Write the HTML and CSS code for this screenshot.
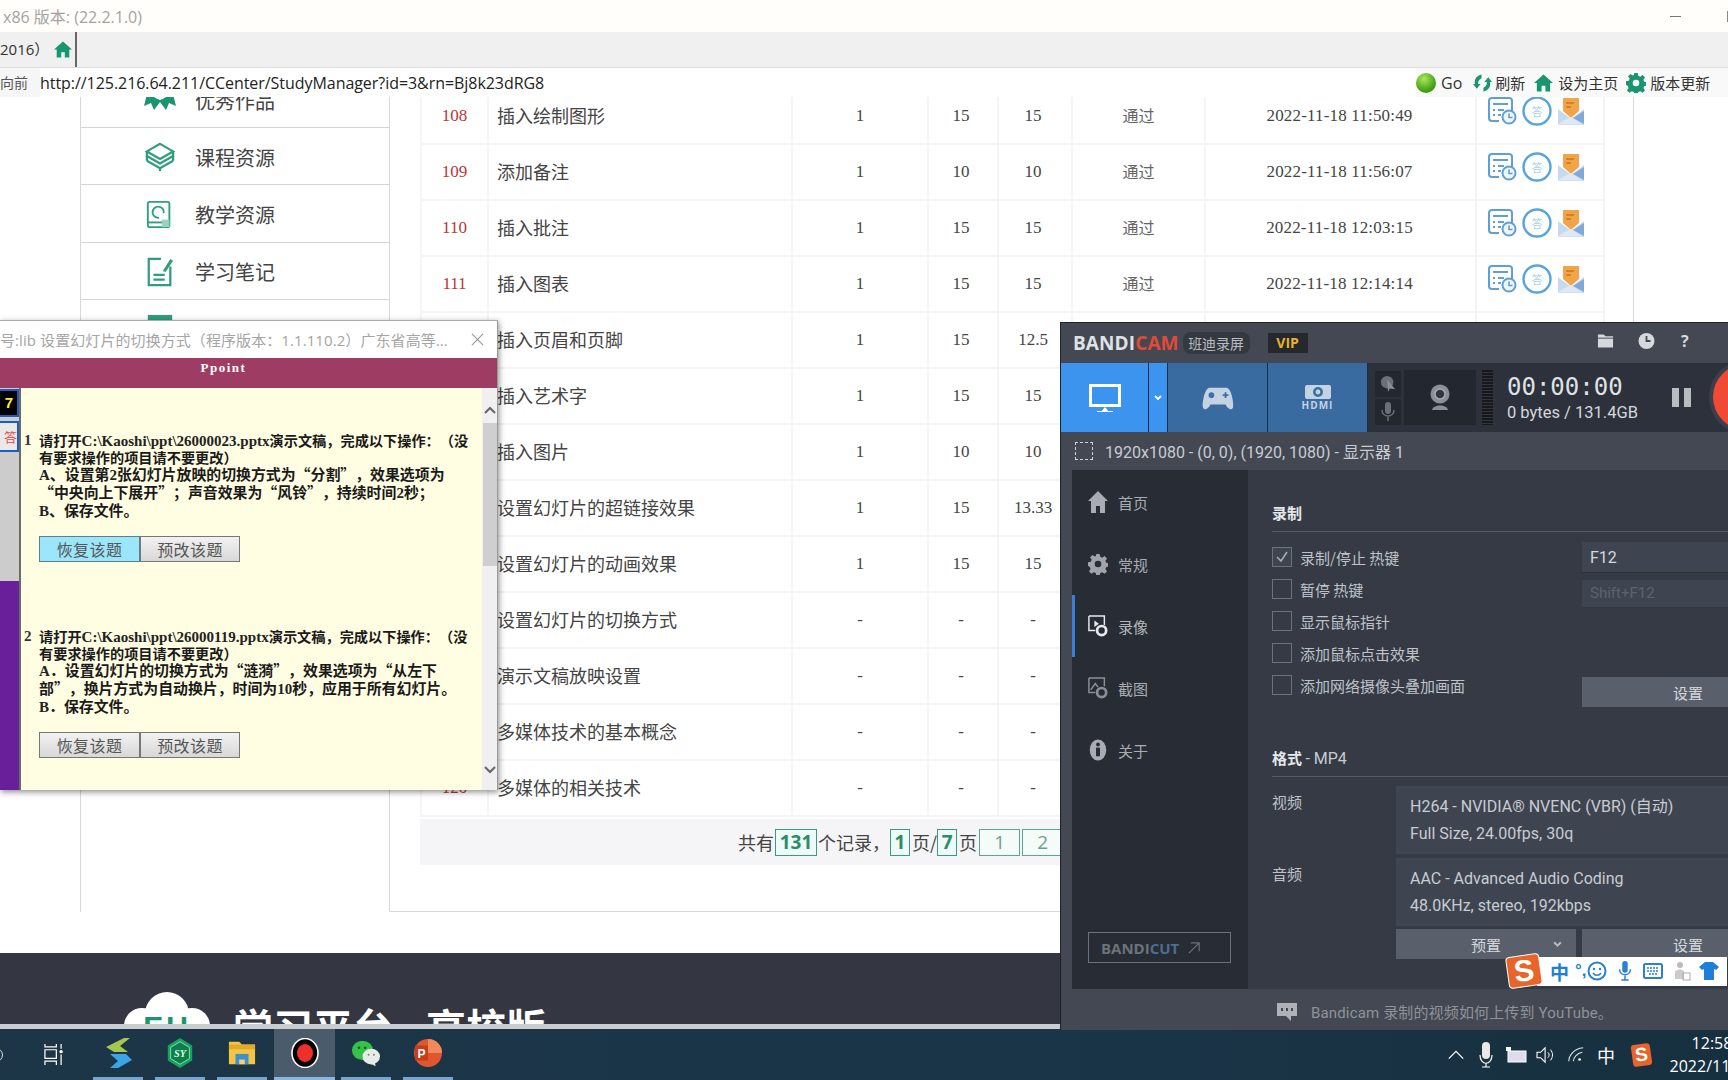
FILE: index.html
```html
<!DOCTYPE html>
<html lang="zh-CN">
<head>
<meta charset="utf-8">
<title>学习平台</title>
<link rel="stylesheet" href="styles.css">
</head>
<body>
<svg class="defs" width="0" height="0" aria-hidden="true">
  <symbol id="i-doc" viewBox="0 0 30 28">
    <path d="M12 24H5a3 3 0 0 1-3-3V4a3 3 0 0 1 3-3h17a3 3 0 0 1 3 3v10" fill="none" stroke="#5f9fd6" stroke-width="2"/>
    <path d="M6 7h15M6 13h2M11 13h6M6 18h2M11 18h3" stroke="#5f9fd6" stroke-width="2" fill="none"/>
    <circle cx="22" cy="20" r="6.5" fill="#eef6fc" stroke="#5f9fd6" stroke-width="2"/>
    <path d="M22 16.5V20.5H25.5" fill="none" stroke="#5f9fd6" stroke-width="1.6"/>
  </symbol>
  <symbol id="i-ans" viewBox="0 0 30 30">
    <circle cx="15" cy="15" r="13.5" fill="#fff" stroke="#58a4dc" stroke-width="2.400"/>
    <text x="15" y="20" text-anchor="middle" class="svg-ans">答</text>
  </symbol>
  <symbol id="i-mail" viewBox="0 0 26 28">
    <path d="M0 12L13 22L26 12V28H0Z" fill="#c6d9ee"/>
    <path d="M26 14V27L15 21Z" fill="#7fa9d8"/>
    <path d="M5 1H21V14L13 21L5 14Z" fill="#f0a548"/>
    <path d="M8 6h8M8 10h5" stroke="#c97a1e" stroke-width="1.4"/>
    <path d="M0 27L12 20L14 21L25 27.500H0Z" fill="#dfe9f5"/>
  </symbol>
  <symbol id="i-home" viewBox="0 0 20 18">
    <path d="M10 0L20 9H17V18H12V12H8V18H3V9H0Z" fill="#19956f"/>
  </symbol>
  <symbol id="i-gear" viewBox="0 0 24 24">
    <path d="M10 0h4l.7 3.400 2.400 1 2.900-1.900 2.800 2.800-1.900 2.900 1 2.400 3.100.4v4l-3.100.7-1 2.400 1.900 2.900-2.800 2.800-2.900-1.900-2.400 1-.7 3.100h-4l-.7-3.100-2.400-1-2.900 1.900-2.800-2.800 1.900-2.900-1-2.400L0 14V10l3.400-.7 1-2.400L2.500 4 5.300 1.200 8.200 3.100l1.100-.6z" fill="currentColor"/>
    <circle cx="12" cy="12" r="4" fill="var(--hole,#fff)"/>
  </symbol>
</svg>

<div class="desktop">
  <div class="browser">
    <div class="titlebar">
      <span class="title-text">x86 版本: (22.2.1.0)</span>
      <span class="win-min"></span>
      <span class="win-max"></span>
    </div>
    <div class="tabbar">
      <div class="tab">
        <span class="tab-text">2016）</span>
        <svg class="tab-home"><use href="#i-home"/></svg>
      </div>
    </div>
    <div class="addrbar">
      <span class="back">向前</span>
      <span class="url">http://125.216.64.211/CCenter/StudyManager?id=3&amp;rn=Bj8k23dRG8</span>
      <div class="tools">
        <span class="go-ball"></span><span class="go">Go</span>
        <svg class="tool-refresh" viewBox="0 0 20 20"><path d="M9 1C4 2 1 6 2 11L0 11L4 16L8 11H5.500C5 8 6.500 6 9 5ZM11 19C16 18 19 14 18 9L20 9L16 4L12 9H14.500C15 12 13.500 14 11 15Z" fill="#19956f"/></svg>
        <span class="tool-label tl-refresh">刷新</span>
        <svg class="tool-home"><use href="#i-home"/></svg>
        <span class="tool-label tl-home">设为主页</span>
        <svg class="tool-gear"><use href="#i-gear"/></svg>
        <span class="tool-label tl-gear">版本更新</span>
      </div>
    </div>
    <div class="viewport">
      <div class="page">
        <div class="columns">
          <aside class="sidenav">
            <div class="nav-item">
              <svg class="nav-icon" viewBox="0 0 32 28"><path d="M4 4C7 10 11 12 16 14C21 12 25 10 28 4L32 20L25 17L22 24L16 16L10 24L7 17L0 20Z" fill="#19956f"/></svg>
              <span>优秀作品</span>
            </div>
            <div class="nav-item">
              <svg class="nav-icon" viewBox="0 0 32 32"><g fill="none" stroke="#2f9e7e" stroke-width="2.400"><path d="M16 2L30 10L16 18L2 10Z"/><path d="M2 15L16 23L30 15"/><path d="M2 20L16 28L30 20"/><path d="M2 10V20M30 10V20M16 28V31"/></g></svg>
              <span>课程资源</span>
            </div>
            <div class="nav-item">
              <svg class="nav-icon" viewBox="0 0 32 32"><g fill="none" stroke="#2f9e7e" stroke-width="2"><rect x="3" y="3" width="23" height="27" rx="2"/><path d="M3 25H26"/><path d="M20 15A6 6 0 1 0 15 20"/></g><path d="M18 22h8v8h-8z" fill="#9ad2be"/></svg>
              <span>教学资源</span>
            </div>
            <div class="nav-item">
              <svg class="nav-icon" viewBox="0 0 32 32"><g fill="none" stroke="#2f9e7e" stroke-width="2.400"><path d="M17 2H4V30H27V10"/><path d="M9 19H21M9 24H21"/></g><path d="M19 15L27 2L30 4L22 16Z" fill="#2f9e7e"/></svg>
              <span>学习笔记</span>
            </div>
            <div class="nav-item"><svg class="nav-icon" viewBox="0 0 32 32"><rect x="3" y="1" width="26" height="30" fill="#2f9e7e"/></svg></div>
            <div class="nav-item"></div>
          </aside>
          <main class="panel">
            <table class="records">
              <colgroup><col class="c-no"><col class="c-name"><col class="c-a"><col class="c-b"><col class="c-c"><col class="c-st"><col class="c-dt"><col class="c-op"></colgroup>
              <tbody>
                <tr><td class="no">108</td><td class="name">插入绘制图形</td><td>1</td><td class="sc">15</td><td class="sc">15</td><td class="st">通过</td><td class="dt">2022-11-18 11:50:49</td><td class="op"><svg class="ic-doc"><use href="#i-doc"/></svg><svg class="ic-ans"><use href="#i-ans"/></svg><svg class="ic-mail"><use href="#i-mail"/></svg></td></tr>
                <tr><td class="no">109</td><td class="name">添加备注</td><td>1</td><td class="sc">10</td><td class="sc">10</td><td class="st">通过</td><td class="dt">2022-11-18 11:56:07</td><td class="op"><svg class="ic-doc"><use href="#i-doc"/></svg><svg class="ic-ans"><use href="#i-ans"/></svg><svg class="ic-mail"><use href="#i-mail"/></svg></td></tr>
                <tr><td class="no">110</td><td class="name">插入批注</td><td>1</td><td class="sc">15</td><td class="sc">15</td><td class="st">通过</td><td class="dt">2022-11-18 12:03:15</td><td class="op"><svg class="ic-doc"><use href="#i-doc"/></svg><svg class="ic-ans"><use href="#i-ans"/></svg><svg class="ic-mail"><use href="#i-mail"/></svg></td></tr>
                <tr><td class="no">111</td><td class="name">插入图表</td><td>1</td><td class="sc">15</td><td class="sc">15</td><td class="st">通过</td><td class="dt">2022-11-18 12:14:14</td><td class="op"><svg class="ic-doc"><use href="#i-doc"/></svg><svg class="ic-ans"><use href="#i-ans"/></svg><svg class="ic-mail"><use href="#i-mail"/></svg></td></tr>
                <tr><td class="no">112</td><td class="name">插入页眉和页脚</td><td>1</td><td class="sc">15</td><td class="sc">12.5</td><td class="st">通过</td><td class="dt"></td><td class="op"></td></tr>
                <tr><td class="no">113</td><td class="name">插入艺术字</td><td>1</td><td class="sc">15</td><td class="sc">15</td><td class="st"></td><td class="dt"></td><td class="op"></td></tr>
                <tr><td class="no">114</td><td class="name">插入图片</td><td>1</td><td class="sc">10</td><td class="sc">10</td><td class="st"></td><td class="dt"></td><td class="op"></td></tr>
                <tr><td class="no">115</td><td class="name">设置幻灯片的超链接效果</td><td>1</td><td class="sc">15</td><td class="sc">13.33</td><td class="st"></td><td class="dt"></td><td class="op"></td></tr>
                <tr><td class="no">116</td><td class="name">设置幻灯片的动画效果</td><td>1</td><td class="sc">15</td><td class="sc">15</td><td class="st"></td><td class="dt"></td><td class="op"></td></tr>
                <tr><td class="no">117</td><td class="name">设置幻灯片的切换方式</td><td>-</td><td class="sc">-</td><td class="sc">-</td><td class="st"></td><td class="dt"></td><td class="op"></td></tr>
                <tr><td class="no">118</td><td class="name">演示文稿放映设置</td><td>-</td><td class="sc">-</td><td class="sc">-</td><td class="st"></td><td class="dt"></td><td class="op"></td></tr>
                <tr><td class="no">119</td><td class="name">多媒体技术的基本概念</td><td>-</td><td class="sc">-</td><td class="sc">-</td><td class="st"></td><td class="dt"></td><td class="op"></td></tr>
                <tr><td class="no">120</td><td class="name">多媒体的相关技术</td><td>-</td><td class="sc">-</td><td class="sc">-</td><td class="st"></td><td class="dt"></td><td class="op"></td></tr>
              </tbody>
            </table>
            <div class="pager">
              <span>共有</span><b class="pg-num pg-total">131</b><span>个记录，</span><b class="pg-num pg-cur">1</b><span>页/</span><b class="pg-num pg-cur">7</b><span>页</span><a class="pg-link pg-first">1</a><a class="pg-link">2</a>
            </div>
          </main>
        </div>
        <footer class="site-foot">
          <svg class="foot-logo" viewBox="0 0 86 60"><circle cx="43" cy="22" r="22" fill="#fff"/><circle cx="18" cy="34" r="18" fill="#fff"/><circle cx="68" cy="34" r="18" fill="#fff"/><rect x="10" y="30" width="66" height="30" fill="#fff"/><text x="43" y="45" text-anchor="middle" class="svg-eu">EU</text></svg>
          <span class="foot-title">学习平台</span><span class="foot-title">高校版</span>
        </footer>
      </div>
    </div>
  </div>

  <div class="taskbar">
    <div class="tb-start">
      <span class="cortana"></span>
      <svg class="taskview" viewBox="0 0 20 22"><g fill="none" stroke="#fff" stroke-width="1.300"><path d="M1 0V3H13V0M1 6H13V15H1ZM1 22V18H13V22"/><path d="M18 0V5M18 11V22"/></g><circle cx="18" cy="8" r="1.800" fill="#fff"/></svg>
    </div>
    <span class="tb-app"><svg class="app-ic" viewBox="0 0 28 30"><path d="M2 9L20 0H26L16 8L24 14H10Z" fill="#a7c64e"/><path d="M6 16H22L28 22L14 30H6L14 23Z" fill="#3ba6e6"/></svg></span>
    <span class="tb-app"><svg class="app-ic" viewBox="0 0 28 32"><path d="M14 0L27 8V24L14 32L1 24V8Z" fill="#17a35f"/><path d="M14 4L24 10V22L14 28L4 22V10Z" fill="#0d7d49" stroke="#8fe0b4"/><text x="14" y="20" text-anchor="middle" class="svg-sy">SY</text></svg></span>
    <span class="tb-app"><svg class="app-ic" viewBox="0 0 30 28"><path d="M1 2H12L15 5H29V26H1Z" fill="#f4c542"/><path d="M1 5H29V10H1Z" fill="#e3a92a"/><path d="M8 15H22V26H8Z" fill="#3f8fd0"/><path d="M12 21H18V26H12Z" fill="#f6d365"/></svg></span>
    <span class="tb-app tb-active"><svg class="app-ic" viewBox="0 0 28 30"><ellipse cx="14" cy="15" rx="13" ry="14.500" fill="#000" stroke="#fff" stroke-width="1.600"/><ellipse cx="14" cy="15" rx="8" ry="9" fill="#ee2f2a"/></svg></span>
    <span class="tb-app"><svg class="app-ic" viewBox="0 0 32 30"><ellipse cx="12" cy="12" rx="12" ry="11" fill="#36c24a"/><circle cx="8" cy="9" r="1.500" fill="#14611f"/><circle cx="15" cy="9" r="1.500" fill="#14611f"/><ellipse cx="22" cy="19" rx="10" ry="9" fill="#e6ece6"/><circle cx="19" cy="17" r="1.200" fill="#888"/><circle cx="25" cy="17" r="1.200" fill="#888"/><path d="M21 27L27 30L26 25Z" fill="#e6ece6"/></svg></span>
    <span class="tb-app"><svg class="app-ic" viewBox="0 0 30 30"><circle cx="15" cy="15" r="15" fill="#e0562f"/><path d="M15 0A15 15 0 0 1 30 15H15Z" fill="#f08a5d"/><rect x="1" y="7" width="14" height="16" rx="1" fill="#c43e1c"/><text x="8" y="20" text-anchor="middle" class="svg-p">P</text></svg></span>
    <div class="tray">
      <svg class="tray-ic" viewBox="0 0 20 20"><path d="M2 14L10 6L18 14" fill="none" stroke="#fff" stroke-width="1.300"/></svg>
      <svg class="tray-ic tray-tall" viewBox="0 0 14 26"><rect x="3" y="0" width="8" height="17" rx="4" fill="#e8e8e8"/><path d="M1 13C1 24 13 24 13 13M7 21V25M3 25H11" fill="none" stroke="#fff" stroke-width="1.200"/></svg>
      <svg class="tray-ic" viewBox="0 0 22 18"><rect x="3" y="5" width="18" height="11" fill="#dde" stroke="#fff"/><path d="M1 1H6V5H1Z" fill="#fff"/></svg>
      <svg class="tray-ic" viewBox="0 0 22 20"><path d="M1 7H5L10 2V18L5 13H1Z" fill="none" stroke="#fff" stroke-width="1.200"/><path d="M13 7C15 9 15 11 13 13M16 4C19 8 19 12 16 16" fill="none" stroke="#fff" stroke-width="1.100"/></svg>
      <svg class="tray-ic" viewBox="0 0 20 20"><path d="M2 17C2 10 8 3 18 2M7 17C7 13 11 8 17 7" fill="none" stroke="#dfe6ea" stroke-width="1.200"/><circle cx="14" cy="15" r="1.500" fill="#fff"/></svg>
      <span class="tray-ime">中</span>
      <span class="sogou-s tray-s">S</span>
      <div class="clock"><span>12:58</span><span>2022/11/18</span></div>
    </div>
  </div>

  <section class="dialog">
    <header class="dlg-head">
      <span class="dlg-title">号:lib&nbsp;设置幻灯片的切换方式（程序版本：1.1.110.2）广东省高等...</span>
      <svg class="dlg-close" viewBox="0 0 14 14"><path d="M1 1L13 13M13 1L1 13" stroke="#999" stroke-width="1.200"/></svg>
    </header>
    <div class="dlg-band">Ppoint</div>
    <div class="dlg-body">
      <div class="dlg-rail">
        <span class="rail-timer">7</span>
        <span class="rail-tag">答</span>
        <span class="rail-grey"></span>
        <span class="rail-purple"></span>
      </div>
      <div class="dlg-list">
        <article class="question q-first">
          <span class="q-no">1</span>
          <div class="q-main">
            <p class="q-lead">请打开<span class="q-lat">C:\Kaoshi\ppt\26000023.pptx</span>演示文稿，完成以下操作：（没<br>有要求操作的项目请不要更改）</p>
            <p class="q-steps"><span class="q-lat">A</span>、设置第<span class="q-lat">2</span>张幻灯片放映的切换方式为“分割”，效果选项为<br>“中央向上下展开”；声音效果为“风铃”，持续时间<span class="q-lat">2</span>秒；<br><span class="q-lat">B</span>、保存文件。</p>
            <div class="q-btns"><button class="q-btn q-on">恢复该题</button><button class="q-btn">预改该题</button></div>
          </div>
        </article>
        <article class="question q-second">
          <span class="q-no">2</span>
          <div class="q-main">
            <p class="q-lead">请打开<span class="q-lat">C:\Kaoshi\ppt\26000119.pptx</span>演示文稿，完成以下操作：（没<br>有要求操作的项目请不要更改）</p>
            <p class="q-steps"><span class="q-lat">A</span>．设置幻灯片的切换方式为“涟漪”，效果选项为“从左下<br>部”，换片方式为自动换片，时间为<span class="q-lat">10</span>秒，应用于所有幻灯片。<br><span class="q-lat">B</span>．保存文件。</p>
            <div class="q-btns"><button class="q-btn">恢复该题</button><button class="q-btn">预改该题</button></div>
          </div>
        </article>
      </div>
      <div class="dlg-scroll">
        <svg class="sb-arrow" viewBox="0 0 12 8"><path d="M1 7L6 2L11 7" fill="none" stroke="#666" stroke-width="2"/></svg>
        <span class="sb-thumb"></span>
        <svg class="sb-arrow sb-down" viewBox="0 0 12 8"><path d="M1 1L6 6L11 1" fill="none" stroke="#666" stroke-width="2"/></svg>
      </div>
    </div>
  </section>

  <section class="bandicam">
    <header class="bc-top">
      <span class="bc-logo">BANDI<em>CAM</em></span>
      <span class="bc-cn">班迪录屏</span>
      <span class="bc-vip">VIP</span>
      <div class="bc-top-icons">
        <svg viewBox="0 0 18 16"><path d="M1 1H7L9 3H17V15H1Z" fill="#d5d8dc"/><path d="M1 5H17" stroke="#434852"/></svg>
        <svg viewBox="0 0 16 16"><circle cx="8" cy="8" r="8" fill="#d5d8dc"/><path d="M8 3V8H12" fill="none" stroke="#434852" stroke-width="1.800"/></svg>
        <span class="bc-help">?</span>
      </div>
    </header>
    <div class="bc-modes">
      <span class="mode mode-screen"><svg class="mode-ic-lg" viewBox="0 0 32 28"><rect x="1.500" y="1.500" width="29" height="20" fill="none" stroke="#fff" stroke-width="3"/><path d="M12 28L16 23L20 28Z" fill="#fff"/><path d="M8 28H24" stroke="#fff" stroke-width="2"/></svg></span>
      <span class="mode mode-drop"><svg viewBox="0 0 8 6"><path d="M1 1L4 4L7 1" fill="none" stroke="#fff" stroke-width="1.800"/></svg></span>
      <span class="mode mode-alt"><svg class="mode-ic-lg" viewBox="0 0 34 26"><path d="M8 2H26C31 2 34 18 33 23C32 26 28 26 25 20H9C6 26 2 26 1 23C0 18 3 2 8 2Z" fill="#c4d3e2"/><circle cx="10" cy="10" r="3" fill="#3d6fa3"/><path d="M22 10H28M25 7V13" stroke="#3d6fa3" stroke-width="2"/></svg></span>
      <span class="mode mode-alt mode-hdmi"><svg class="mode-ic-hd" viewBox="0 0 34 14"><rect x="4" y="0" width="26" height="14" rx="2" fill="#c4d3e2"/><circle cx="17" cy="7" r="5" fill="#3d6fa3"/><circle cx="17" cy="7" r="2.400" fill="#c4d3e2"/></svg><span class="hdmi-text">HDMI</span></span>
      <div class="bc-status">
        <div class="bc-mini">
          <span class="mini-box"><svg viewBox="0 0 18 20"><circle cx="8" cy="8" r="7" fill="#6b7078"/><path d="M8 5L17 16L11 15L9 19Z" fill="#8a8f96"/></svg></span>
          <span class="mini-box"><svg viewBox="0 0 14 20"><rect x="4" y="0" width="6" height="12" rx="3" fill="#6b7078"/><path d="M1 8C1 16 13 16 13 8M7 15V19" fill="none" stroke="#6b7078" stroke-width="1.500"/></svg></span>
        </div>
        <span class="cam-box"><svg viewBox="0 0 22 30"><circle cx="11" cy="11" r="9.500" fill="#8b9097"/><circle cx="11" cy="11" r="5" fill="#33373f" stroke="#a9adb3" stroke-width="1.500"/><path d="M3 27C4 21 18 21 19 27Z" fill="#8b9097"/></svg></span>
        <span class="meter"></span>
        <div class="bc-timer"><span class="time">00:00:00</span><span class="bytes">0 bytes / 131.4GB</span></div>
        <span class="pause"><i></i><i></i></span>
        <span class="rec"></span>
      </div>
    </div>
    <div class="bc-region">
      <span class="region-ic"></span>
      <span>1920x1080 - (0, 0), (1920, 1080) - 显示器 1</span>
    </div>
    <div class="bc-body">
      <nav class="bc-side">
        <a class="bc-nav"><svg class="bc-nav-ic" viewBox="0 0 20 22"><path d="M10 0L20 10H17V22H12V15H8V22H3V10H0Z" fill="#a9adb3"/></svg>首页</a>
        <a class="bc-nav"><svg class="bc-nav-ic bc-gear"><use href="#i-gear"/></svg>常规</a>
        <a class="bc-nav bc-nav-on"><svg class="bc-nav-ic" viewBox="0 0 22 24"><path d="M1 1H18V11M8 17H1V1" fill="none" stroke="#e8eaec" stroke-width="1.600"/><path d="M7 6L12 9.500L7 13Z" fill="#e8eaec"/><circle cx="15" cy="17" r="5" fill="none" stroke="#e8eaec" stroke-width="3"/></svg>录像</a>
        <a class="bc-nav"><svg class="bc-nav-ic" viewBox="0 0 22 24"><path d="M1 1H18V10M8 17H1V1" fill="none" stroke="#8b9097" stroke-width="1.600"/><path d="M3 14L8 7L11 11" fill="none" stroke="#8b9097" stroke-width="1.600"/><circle cx="15" cy="17" r="5" fill="none" stroke="#8b9097" stroke-width="3"/></svg>截图</a>
        <a class="bc-nav"><svg class="bc-nav-ic" viewBox="0 0 22 28"><ellipse cx="11" cy="14" rx="10.500" ry="13.500" fill="#a9adb3"/><circle cx="11" cy="7" r="2.400" fill="#272c35"/><rect x="8.500" y="11" width="5" height="11" fill="#272c35"/></svg>关于</a>
        <span class="bandicut">BANDI<em>CUT</em><svg viewBox="0 0 14 14"><path d="M1 13L12 2M3 2H12V11" fill="none" stroke="#6d727a" stroke-width="1.300"/></svg></span>
      </nav>
      <div class="bc-main">
        <h3 class="bc-h">录制</h3>
        <div class="bc-rec-grid">
          <div class="bc-checks">
            <label class="chk"><span class="box box-on"><svg viewBox="0 0 14 12"><path d="M2 6L6 10L12 1" fill="none" stroke="#a9adb3" stroke-width="1.600"/></svg></span>录制/停止 热键</label>
            <label class="chk"><span class="box"></span>暂停 热键</label>
            <label class="chk"><span class="box"></span>显示鼠标指针</label>
            <label class="chk"><span class="box"></span>添加鼠标点击效果</label>
            <label class="chk"><span class="box"></span>添加网络摄像头叠加画面</label>
          </div>
          <div class="bc-keys">
            <span class="key">F12</span>
            <span class="key key-off">Shift+F12</span>
            <span class="bc-btn key-btn">设置</span>
          </div>
        </div>
        <h3 class="bc-h bc-h2">格式 <small>- MP4</small></h3>
        <div class="bc-fmt">
          <span class="fmt-label">视频</span>
          <div class="fmt-box"><span>H264 - NVIDIA® NVENC (VBR) (自动)</span><span>Full Size, 24.00fps, 30q</span></div>
          <span class="fmt-label">音频</span>
          <div class="fmt-box"><span>AAC - Advanced Audio Coding</span><span>48.0KHz, stereo, 192kbps</span></div>
          <span></span>
          <div class="fmt-btns">
            <span class="bc-btn btn-preset">预置<svg viewBox="0 0 8 6"><path d="M1 1L4 4L7 1" fill="none" stroke="#b6bac0" stroke-width="1.800"/></svg></span>
            <span class="bc-btn btn-set">设置</span>
          </div>
        </div>
      </div>
    </div>
    <footer class="bc-foot">
      <svg class="foot-ic" viewBox="0 0 20 18"><path d="M0 0H20V13H14V18L9 13H0Z" fill="#aeb2b8"/><path d="M5 5V8M10 5V8M15 5V8" stroke="#434852" stroke-width="2"/></svg>
      <span>Bandicam 录制的视频如何上传到 YouTube。</span>
    </footer>
  </section>

  <div class="sogou">
    <span class="sogou-s sogou-big">S</span>
    <div class="sogou-bar">
      <span class="sg-zh">中</span>
      <span class="sg-punct">°,</span>
      <svg viewBox="0 0 20 20"><circle cx="10" cy="10" r="8.500" fill="none" stroke="#2a7fd6" stroke-width="2"/><circle cx="7" cy="8" r="1.200" fill="#2a7fd6"/><circle cx="13" cy="8" r="1.200" fill="#2a7fd6"/><path d="M6 12C8 15 12 15 14 12" fill="none" stroke="#2a7fd6" stroke-width="1.500"/></svg>
      <svg viewBox="0 0 16 22"><rect x="5" y="0" width="6" height="13" rx="3" fill="#2a7fd6"/><path d="M2 9C2 17 14 17 14 9M8 16V21M4 21H12" fill="none" stroke="#2a7fd6" stroke-width="1.600"/></svg>
      <svg viewBox="0 0 20 16"><rect x="1" y="1" width="18" height="14" rx="1.500" fill="none" stroke="#2a7fd6" stroke-width="2"/><path d="M4 5H16M4 8H16M6 11H14" stroke="#2a7fd6" stroke-width="1.500" stroke-dasharray="2 1"/></svg>
      <svg viewBox="0 0 20 20"><circle cx="9" cy="4" r="3" fill="#bbb"/><path d="M4 18V10L9 8L13 10V18Z" fill="#ccc"/><rect x="12" y="12" width="7" height="7" fill="none" stroke="#aaa"/></svg>
      <svg viewBox="0 0 20 18"><path d="M6 0H14L20 5L17 8L15 7V18H5V7L3 8L0 5Z" fill="#1f7fd6"/></svg>
    </div>
  </div>
</div>
</body>
</html>
```

FILE: styles.css
```css
* { box-sizing: border-box; }
html, body { margin: 0; padding: 0; height: 100%; overflow: hidden; background: #fff; }
body { font-family: "Liberation Sans", "Noto Sans CJK SC", sans-serif; color: #333; }
.defs { position: absolute; }
.svg-ans { font: 11px "Noto Sans CJK SC", sans-serif; fill: #a8cfe9; }
.svg-eu { font: bold 30px "Liberation Sans", sans-serif; fill: #19956f; letter-spacing: 3px; }
.svg-sy { font: italic bold 11px "Liberation Serif", serif; fill: #d6ffe6; }
.svg-p { font: bold 13px "Liberation Sans", sans-serif; fill: #fff; }

.desktop { position: relative; width: 1728px; height: 1080px; overflow: hidden; display: flex; flex-direction: column; }

/* Browser */
.browser { height: 1029px; display: flex; flex-direction: column; border-bottom: 5px solid #c9cdd0; overflow: hidden; }
.titlebar { height: 32px; flex: none; display: flex; align-items: center; padding-left: 3px; background: #fffefb; }
.title-text { font: 16px "Open Sans", "Noto Sans CJK SC", sans-serif; color: #a3a3a3; }
.win-min { margin-left: auto; width: 11px; height: 1px; background: #777; margin-right: 46px; }
.win-max { width: 1px; height: 11px; background: #888; }
.tabbar { height: 36px; flex: none; background: #f0f0f0; border-bottom: 1px solid #ddd; display: flex; }
.tab { display: flex; align-items: center; width: 77px; border-right: 2px solid #666; }
.tab-text { font: 15px "Open Sans", "Noto Sans CJK SC", sans-serif; color: #333; width: 54px; white-space: nowrap; margin-top: -3px; }
.tab-home { width: 18px; height: 17px; }
.addrbar { height: 29px; flex: none; display: flex; align-items: center; background: #fff; position: relative; z-index: 2; }
.back { width: 40px; height: 29px; flex: none; background: #f6f6f6; color: #555; font: 14px/29px "Noto Sans CJK SC", sans-serif; }
.url { font: 16px "Open Sans", sans-serif; color: #222; white-space: nowrap; letter-spacing: -.05px; }
.tools { margin-left: auto; width: 312px; height: 29px; display: flex; align-items: center; background: #f9f9f9; font: 15px "Noto Sans CJK SC", sans-serif; color: #333; }
.go-ball { width: 20px; height: 20px; border-radius: 50%; background: radial-gradient(circle at 40% 30%, #a8e860, #4aa516 60%, #2c7a0c); margin-left: 0; }
.go { font: 16px "Open Sans", sans-serif; margin-left: 5px; }
.tool-refresh { width: 19px; height: 20px; margin-left: 11px; }
.tool-label { white-space: nowrap; }
.tl-refresh { margin-left: 3px; }
.tool-home { width: 19px; height: 18px; margin-left: 9px; }
.tl-home { margin-left: 5px; }
.tool-gear { width: 20px; height: 20px; margin-left: 8px; color: #19956f; --hole: #f9f9f9; }
.tl-gear { margin-left: 4px; }

.viewport { flex: 1; overflow: hidden; }
.page { margin-top: -26px; }
.columns { display: flex; height: 841px; padding-left: 80px; }
.sidenav { width: 310px; flex: none; border-left: 1px solid #d8d8d8; border-right: 1px solid #d8d8d8; height: 100%; }
.nav-item { height: 57.200px; padding-top: 2px; border-bottom: 1px solid #d5d5d5; display: flex; align-items: center; padding-left: 63px; gap: 19px; font: 20px "Noto Sans CJK SC", sans-serif; color: #444; }
.nav-icon { width: 32px; height: 30px; flex: none; }
.panel { width: 1244px; flex: none; border-right: 1px solid #d8d8d8; border-bottom: 1px solid #d8d8d8; padding: 16px 0 0 30px; }

.records { border-collapse: collapse; table-layout: fixed; width: 1183px; font: 17px "Liberation Serif", "Noto Sans CJK SC", serif; color: #444; }
.c-no { width: 67px; } .c-name { width: 304px; } .c-a { width: 136px; } .c-b { width: 70px; } .c-c { width: 74px; } .c-st { width: 133px; } .c-dt { width: 271px; } .c-op { width: 128px; }
.records tr { height: 56px; }
.records td { border: 2px solid #f5f5f5; text-align: center; padding: 0; white-space: nowrap; }
.records .no { color: #b8363a; }
.records .sc { padding-right: 4px; }
.records .dt { letter-spacing: .17px; padding-right: 2px; }
.records .name { text-align: left; padding: 0 0 3px 8px; font: 18px "Noto Sans CJK SC", sans-serif; color: #444; }
.records .st { font: 16px "Noto Sans CJK SC", sans-serif; color: #666; padding-bottom: 2px; }
.records .op { text-align: left; padding: 0 0 10px 10px; line-height: 0; }
.op svg { vertical-align: middle; }
.ic-doc { width: 30px; height: 28px; }
.ic-ans { width: 30px; height: 30px; margin-left: 5px; }
.ic-mail { width: 26px; height: 28px; margin-left: 6px; }

.pager { margin-top: 2px; height: 46px; width: 1183px; background: #f5f5f7; display: flex; align-items: center; padding-left: 318px; font: 18px "Noto Sans CJK SC", sans-serif; color: #444; white-space: nowrap; }
.pg-num { height: 27px; border: 1px solid #3d9a80; background: #eefaf7; color: #2e8b6a; font: bold 19px/25px "Open Sans", sans-serif; text-align: center; }
.pg-total { width: 42px; margin: 0 1px; }
.pg-cur { width: 20px; margin: 0 2px 0 0; }
.pg-link { height: 27px; width: 41px; margin-right: 2px; border: 1px solid #5aa890; background: #f4fbf9; color: #6f9f8c; font: 19px/25px "Open Sans", sans-serif; text-align: center; }
.pg-first { margin-left: 2px; }

.site-foot { margin-top: 41px; height: 120px; background: #343742; padding: 39px 0 0 124px; display: flex; align-items: flex-start; }
.foot-logo { width: 86px; height: 60px; flex: none; }
.foot-title { font: bold 40px/56px "Noto Sans CJK SC", sans-serif; color: #fff; margin: 6px 0 0 23px; white-space: nowrap; }
.foot-title + .foot-title { margin-left: 33px; }

/* Taskbar */
.taskbar { height: 51px; flex: none; display: flex; background: linear-gradient(90deg, #1c3647, #1a3548 60%, #17303f); overflow: hidden; }
.tb-start { width: 87px; flex: none; display: flex; align-items: center; position: relative; }
.cortana { width: 14px; height: 14px; border: 1.500px solid #ddd; border-radius: 50%; margin-left: -11px; }
.taskview { width: 19px; height: 21px; margin-left: 41px; }
.tb-app { width: 50px; height: 51px; margin: 0 6px; flex: none; display: flex; align-items: center; justify-content: center; border-bottom: 3px solid #74a6cf; }
.tb-active { width: 61px; margin: 0 0 0 1px; background: #4a5c6c; border-bottom-color: #86b8e2; }
.tb-active + .tb-app { margin-left: 6px; }
.app-ic { width: 28px; height: 30px; }
.tray { margin-left: auto; margin-right: -24px; display: flex; align-items: center; color: #fff; flex: none; }
.tray-ic { width: 30px; height: 18px; }
.tray-tall { height: 26px; }
.tray-ime { width: 30px; text-align: center; font: 18px "Noto Sans CJK SC", sans-serif; }
.sogou-s { display: inline-flex; align-items: center; justify-content: center; background: #e8642a; color: #fff; font-family: "Liberation Sans", sans-serif; font-weight: bold; transform: rotate(-8deg); }
.tray-s { width: 19px; height: 22px; font-size: 19px; border-radius: 3px; margin-left: 11px; }
.clock { display: flex; flex-direction: column; align-items: center; gap: 3px; margin-left: 21px; width: 80px; font: 16px/20px "Open Sans", sans-serif; white-space: nowrap; }

/* Dialog */
.dialog { position: absolute; left: 0; top: 320px; width: 498px; height: 470px; background: #fff; border-top: 1px solid #aaa; border-right: 1px solid #999; box-shadow: 1px 2px 6px rgba(0,0,0,.45); display: flex; flex-direction: column; z-index: 3; text-spacing-trim: space-all; }
.dlg-head { height: 37px; flex: none; display: flex; align-items: center; font: 15px "Open Sans", "Noto Sans CJK SC", sans-serif; letter-spacing: .08px; color: #a5a5a5; white-space: nowrap; }
.dlg-title { width: 462px; overflow: hidden; }
.dlg-close { width: 13px; height: 13px; margin-left: 9px; }
.dlg-band { height: 30px; flex: none; background: #9e3c64; color: #fff; font: bold 13px/20px "Liberation Serif", serif; letter-spacing: 1.500px; text-align: center; padding-right: 50px; }
.dlg-body { flex: 1; display: flex; min-height: 0; }
.dlg-rail { width: 21px; flex: none; display: flex; flex-direction: column; border-right: 2px solid #6b6b6b; background: #ccc; padding-top: 1px; }
.rail-timer { height: 28px; flex: none; background: #000; border: 2px solid #1a5fbf; border-left: 0; color: #ffe94a; font: bold 15px/24px "Liberation Sans", sans-serif; text-align: right; padding-right: 4px; }
.rail-tag { height: 31px; flex: none; margin-top: 4px; background: #e9e9e9; border: 2px solid #1a5fbf; border-left: 0; color: #e34b4b; font: 13px/27px "Noto Sans CJK SC", sans-serif; overflow: hidden; text-align: right; }
.rail-grey { height: 129px; flex: none; }
.rail-purple { flex: 1; background: #6a1f9a; }
.dlg-list { flex: 1; background: #fffde2; overflow: hidden; }
.question { display: flex; color: #1a1a1a; font: bold 14.200px "Noto Sans CJK SC", sans-serif; white-space: nowrap; }
.q-first { margin-top: 44px; }
.q-second { margin-top: 66px; }
.q-no { width: 18px; flex: none; padding-left: 3px; font: bold 15px/16px "Liberation Serif", serif; color: #333; }
.q-lead { margin: 0; height: 32px; line-height: 16px; }
.q-lat { font: bold 15px/1 "Liberation Serif", serif; color: #222; }
.q-steps { margin: 1px 0 0; height: 54px; line-height: 18px; font-size: 14.900px; }
.q-btns { display: flex; margin-top: 17px; }
.q-btn { width: 100px; height: 26px; padding: 0; border: 1px solid #777; background: linear-gradient(#f2f2f2, #d8d8d8); color: #555; font: 16px/22px "Noto Sans CJK SC", sans-serif; letter-spacing: .4px; }
.q-btn:first-child { width: 101px; }
.q-on { background: #9ce6fb; border-color: #5a7f90; }
.dlg-scroll { width: 15px; flex: none; background: #f0f0f0; display: flex; flex-direction: column; align-items: center; position: relative; }
.sb-arrow { width: 12px; height: 8px; margin-top: 18px; flex: none; }
.sb-thumb { width: 14px; height: 143px; margin-top: 9px; background: #cfcfcf; flex: none; }
.sb-down { margin-top: auto; margin-bottom: 16px; }

/* Bandicam */
.bandicam { position: absolute; left: 1060px; top: 322px; width: 668px; height: 708px; background: #434852; border-top: 1px solid #1e2127; border-left: 1px solid #1e2127; display: flex; flex-direction: column; overflow: hidden; z-index: 4; font-family: "Roboto", "Noto Sans CJK SC", sans-serif; color: #c8ccd2; }
.bc-top { height: 40px; flex: none; display: flex; align-items: center; padding-left: 12px; }
.bc-logo { font: bold 19px "Open Sans", sans-serif; color: #dfe1e4; letter-spacing: .1px; }
.bc-logo em { font-style: normal; color: #e04a36; }
.bc-cn { margin-left: 4px; height: 22px; width: 67px; background: #34383f; border-radius: 8px; text-align: center; font: 14px/22px "Noto Sans CJK SC", sans-serif; color: #b8bcc2; }
.bc-vip { margin-left: 18px; width: 40px; height: 20px; background: #25282d; text-align: center; font: bold 14px/20px "Open Sans", sans-serif; color: #e9b22d; }
.bc-top-icons { position: absolute; left: 536px; top: 7px; display: flex; align-items: center; gap: 24px; }
.bc-top-icons svg { width: 17px; height: 16px; }
.bc-help { font: bold 16px "Open Sans", sans-serif; color: #d5d8dc; margin-left: 2px; }
.bc-modes { height: 69px; flex: none; display: flex; }
.mode { display: flex; align-items: center; justify-content: center; border-right: 1px solid #16304c; flex: none; }
.mode-screen { width: 88px; background: #3c94ef; }
.mode-drop { width: 19px; background: #3c94ef; }
.mode-drop svg { width: 8px; height: 6px; }
.mode-alt { width: 100px; background: #3a6ba0; }
.mode-hdmi { flex-direction: column; }
.mode-ic-lg { width: 32px; height: 28px; }
.mode-ic-hd { width: 34px; height: 14px; }
.hdmi-text { font: bold 10px/12px "Open Sans", sans-serif; color: #c4d3e2; letter-spacing: 1px; }
.bc-status { flex: 1; background: #2c313b; display: flex; align-items: center; position: relative; padding-left: 7px; min-width: 0; }
.bc-mini { display: flex; flex-direction: column; gap: 2px; }
.mini-box { width: 26px; height: 26px; background: #23272f; display: flex; align-items: center; justify-content: center; }
.mini-box svg { width: 16px; height: 20px; }
.cam-box { width: 72px; height: 55px; margin-left: 3px; background: #23272f; display: flex; align-items: center; justify-content: center; }
.cam-box svg { width: 22px; height: 30px; }
.meter { width: 11px; height: 55px; margin-left: 6px; background: repeating-linear-gradient(#16181d 0 2px, #30343c 2px 3px); }
.bc-timer { display: flex; flex-direction: column; margin-left: 14px; width: 165px; flex: none; }
.time { font: 24px/30px "DejaVu Sans Mono", monospace; color: #dfe1e4; }
.bytes { font: 16.500px/22px "Roboto", sans-serif; color: #d5d8dc; }
.pause { display: flex; gap: 5px; flex: none; }
.pause i { width: 7px; height: 19px; background: #b9bcc0; }
.rec { position: absolute; left: 345px; top: 1px; width: 66px; height: 66px; border-radius: 50%; background: #ef4a33; box-shadow: 0 0 0 4px #3a3f49; }
.bc-region { height: 38px; flex: none; display: flex; align-items: center; gap: 12px; padding-left: 14px; font: 16px "Roboto", "Noto Sans CJK SC", sans-serif; color: #c8ccd2; }
.region-ic { width: 18px; height: 18px; border: 1px dashed #cfd2d6; }
.bc-body { flex: 1; min-height: 0; display: flex; margin-left: 11px; }
.bc-side { width: 176px; flex: none; background: #272c35; padding-top: 1px; display: flex; flex-direction: column; }
.bc-nav { height: 62px; flex: none; display: flex; align-items: center; padding-left: 13px; border-left: 3px solid transparent; font: 15px "Noto Sans CJK SC", sans-serif; color: #a9adb3; }
.bc-nav-on { border-left-color: #3b7fd4; color: #b5b9be; }
.bc-nav-ic { width: 20px; height: 22px; margin-right: 10px; flex: none; }
.bc-gear { color: #a0a4aa; --hole: #272c35; }
.bandicut { margin: auto 0 26px 16px; width: 143px; height: 31px; flex: none; border: 1px solid #6d727a; display: flex; align-items: center; padding-left: 12px; font: bold 15px "Open Sans", sans-serif; color: #6d727a; }
.bandicut em { font-style: normal; color: #4b6f91; }
.bandicut svg { width: 13px; height: 13px; margin-left: 9px; }
.bc-main { flex: 1; background: #353a45; padding: 33px 0 0 24px; min-width: 0; }
.bc-h { margin: 0; padding-bottom: 8px; border-bottom: 1px solid #565b65; font: bold 15px/20px "Noto Sans CJK SC", sans-serif; color: #e6e8ea; box-sizing: content-box; height: 20px; }
.bc-h small { font: 16px "Roboto", sans-serif; color: #c8ccd2; }
.bc-rec-grid { display: flex; margin-top: 10px; }
.bc-checks { width: 310px; flex: none; display: flex; flex-direction: column; margin-top: -1px; }
.chk { height: 32px; display: flex; align-items: center; gap: 8px; font: 15px "Noto Sans CJK SC", sans-serif; color: #bfc3c9; }
.box { width: 20px; height: 20px; border: 1px solid #6d727a; flex: none; display: flex; align-items: center; justify-content: center; }
.box svg { width: 14px; height: 12px; }
.box-on { background: #3f4550; }
.bc-keys { flex: none; width: 212px; display: flex; flex-direction: column; }
.key { height: 31px; background: #3f4550; padding-left: 8px; font: 16px/31px "Roboto", sans-serif; color: #d5d8dc; border-bottom: 1px solid #2d313a; }
.key-off { height: 27px; margin-top: 7px; color: #5d626c; font-size: 15px; line-height: 27px; border: 0; }
.bc-btn { height: 30px; background: #5a606b; display: flex; align-items: center; justify-content: center; font: 15px "Noto Sans CJK SC", sans-serif; color: #d5d8dc; flex: none; }
.key-btn { margin-top: 70px; padding-right: 0; }
.bc-h2 { margin-top: 41px; }
.bc-fmt { display: grid; grid-template-columns: 124px 1fr; row-gap: 4px; margin-top: 9px; }
.fmt-label { font: 15px/20px "Noto Sans CJK SC", sans-serif; color: #bfc3c9; padding-top: 6px; }
.fmt-box { height: 68px; width: 400px; background: #3f4550; padding: 7px 0 0 14px; display: flex; flex-direction: column; font: 16px/27px "Roboto", "Noto Sans CJK SC", sans-serif; color: #c8ccd2; white-space: nowrap; }
.fmt-btns { display: flex; gap: 6px; margin-top: -1px; }
.btn-preset { width: 180px; position: relative; }
.btn-preset svg { position: absolute; right: 14px; top: 12px; width: 9px; height: 7px; }
.btn-set { width: 212px; }
.bc-foot { height: 41px; flex: none; display: flex; align-items: center; padding: 4px 0 0 216px; gap: 14px; font: 15px "Roboto", "Noto Sans CJK SC", sans-serif; letter-spacing: .15px; color: #8f939a; white-space: nowrap; }
.foot-ic { width: 20px; height: 18px; }

/* Sogou */
.sogou { position: absolute; left: 1507px; top: 955px; z-index: 5; display: flex; align-items: center; }
.sogou-big { width: 34px; height: 32px; font-size: 30px; border-radius: 4px; border: 1px solid #fff; position: relative; z-index: 1; }
.sogou-bar { margin-left: -4px; width: 190px; height: 29px; background: #fff; display: flex; align-items: center; padding-left: 13px; gap: 0; }
.sogou-bar svg { width: 20px; height: 20px; flex: none; margin-right: 8px; }
.sg-zh { font: bold 19px "Noto Sans CJK SC", sans-serif; color: #1f7fd6; width: 28px; }
.sg-punct { font: bold 17px "Liberation Sans", sans-serif; color: #1f7fd6; width: 39px; padding-left: 6px; }
```
